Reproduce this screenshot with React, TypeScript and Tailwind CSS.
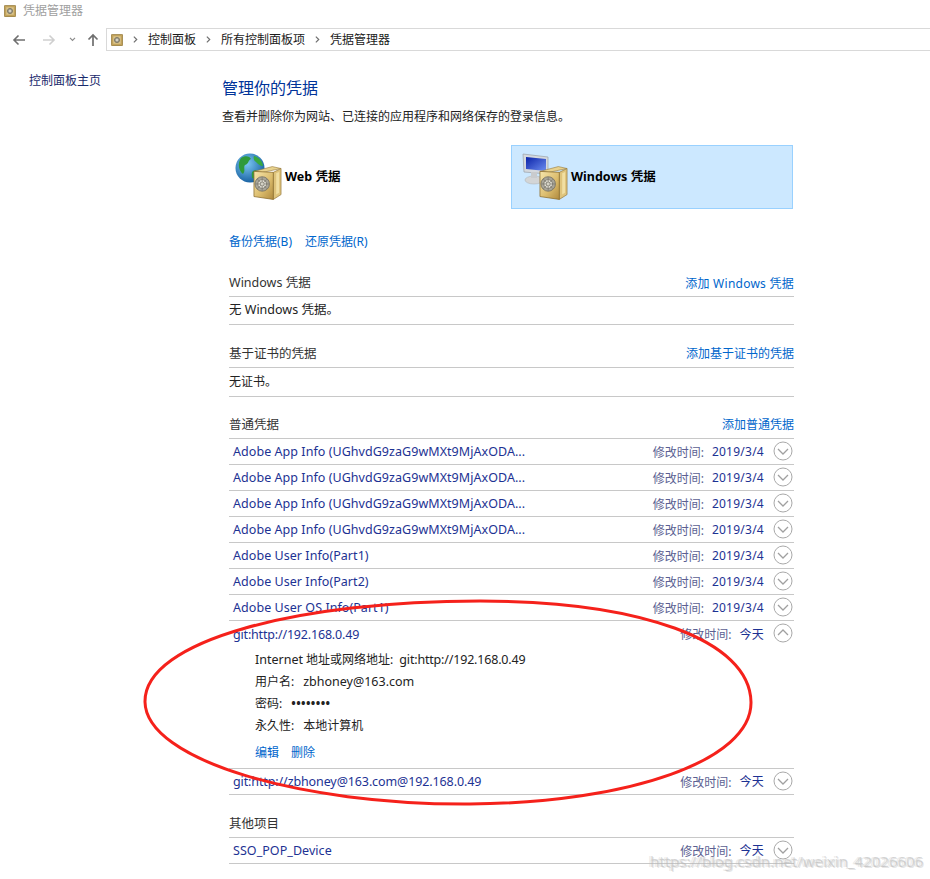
import React from "react";

const font = { fontFamily: '"Noto Sans", "Noto Sans CJK SC", sans-serif' };

function Safe({ id, className }: { id: string; className?: string }) {
  return (
    <svg viewBox="0 0 30 36" className={className}>
      <defs>
        <linearGradient id={id} x1="0" y1="0" x2="1" y2="1">
          <stop offset="0" stopColor="#f6e6ad" />
          <stop offset="0.55" stopColor="#dcbd6e" />
          <stop offset="1" stopColor="#b08a3e" />
        </linearGradient>
      </defs>
      <path d="M1 6 L20 1 L29 3 L10 7 Z" fill="#e8d28e" stroke="#94763a" strokeWidth="0.6" />
      <path d="M21 7 L29 3 L29 30 L21 35 Z" fill="#dfc47c" stroke="#94763a" strokeWidth="0.7" />
      <path d="M24 8 L27 6.5 L27 28 L24 30 Z" fill="#f1dfa2" />
      <path d="M1 6 L21 7 L21 35 L1 32 Z" fill={`url(#${id})`} stroke="#8d6f2f" strokeWidth="0.8" />
      <circle cx="9.5" cy="19" r="7.5" fill="#a8a598" stroke="#6f6b60" strokeWidth="0.8" />
      <circle cx="9.5" cy="19" r="4.5" fill="#e3e1d6" stroke="#77736a" strokeWidth="0.8" />
      <path d="M9.5 12 V26 M2.5 19 H16.5 M4.5 14 L14.5 24 M14.5 14 L4.5 24" stroke="#77736a" strokeWidth="0.7" />
      <circle cx="9.5" cy="19" r="2" fill="#d4d2c6" stroke="#6f6b60" strokeWidth="0.6" />
    </svg>
  );
}

function SmallSafe() {
  return (
    <svg viewBox="0 0 16 16" className="w-3 h-3 shrink-0">
      <rect x="0.5" y="0.5" width="15" height="15" rx="1" fill="#c2a25a" stroke="#8f7434" />
      <rect x="3" y="3" width="10" height="10" fill="#d9c48a" />
      <circle cx="8" cy="8" r="3.4" fill="#a9a594" stroke="#6b6658" />
      <circle cx="8" cy="8" r="1.2" fill="#ece9dd" />
    </svg>
  );
}

function Globe() {
  return (
    <svg viewBox="0 0 30 30" className="w-[30px] h-[30px] absolute left-[13px] top-[8px]">
      <defs>
        <radialGradient id="globe" cx="0.4" cy="0.35" r="0.7">
          <stop offset="0" stopColor="#7cc8f2" />
          <stop offset="1" stopColor="#135c9e" />
        </radialGradient>
      </defs>
      <circle cx="15" cy="15" r="14.5" fill="url(#globe)" />
      <path d="M6 5 C10 2 15 3 16 6 C13 7 14 11 10 12 C8 14 11 18 8 21 C4 18 2 11 6 5 Z" fill="#2f9a3a" />
      <path d="M19 3 C24 4 28 9 28 13 C25 13 23 11 21 9 C19 8 18 5 19 3 Z" fill="#38a83f" />
      <path d="M18 18 C21 16 24 18 24 20 C22 24 19 26 17 25 C17 22 16 20 18 18 Z" fill="#2f9a3a" />
    </svg>
  );
}

function Monitor() {
  return (
    <svg viewBox="0 0 30 34" className="w-[30px] h-[34px] absolute left-[9px] top-[7px]">
      <defs>
        <linearGradient id="screen" x1="0" y1="0" x2="1" y2="1">
          <stop offset="0" stopColor="#0a22a8" />
          <stop offset="1" stopColor="#6d8df0" />
        </linearGradient>
      </defs>
      <path d="M2 1 L27 4 L27 21 L3 19 Z" fill="#d5d9de" stroke="#9aa0a8" strokeWidth="0.7" />
      <path d="M5 4 L25 6 L25 18 L5 16 Z" fill="url(#screen)" />
      <ellipse cx="13" cy="27" rx="9" ry="4" fill="#d3d5d6" stroke="#b3b5b7" strokeWidth="0.6" />
      <rect x="10" y="19" width="6" height="6" fill="#c9cbcd" />
    </svg>
  );
}

function Circle({ up }: { up?: boolean }) {
  return (
    <svg viewBox="0 0 20 20" className="w-5 h-5 shrink-0 ml-[9px] mb-[2px]">
      <circle cx="10" cy="10" r="9" fill="#fff" stroke="#a9a9a9" strokeWidth="1" />
      <path d={up ? "M5 12 L10 7 L15 12" : "M5 8 L10 13 L15 8"} fill="none" stroke="#a0a0a0" strokeWidth="1.3" />
    </svg>
  );
}

function Crumb() {
  return (
    <svg viewBox="0 0 6 8" className="w-[5px] h-[7px] shrink-0">
      <path d="M1 0.5 L4.5 4 L1 7.5" fill="none" stroke="#6e6e6e" strokeWidth="1.4" />
    </svg>
  );
}

function SectionHead({ title, action, actionClass, height }: { title: string; action: string; actionClass?: string; height?: string }) {
  return (
    <div className={(height ?? "h-[27px]") + " flex items-center justify-between border-b border-[#c8c8c8] text-[12px]"}>
      <span className="text-[#333333] text-[12.5px]">{title}</span>
      <span className={"text-[#0066cc] " + (actionClass ?? "")}>{action}</span>
    </div>
  );
}

function Row({ name, time, up, nameClass }: { name: string; time: string; up?: boolean; nameClass?: string }) {
  return (
    <div className="h-[26px] flex items-center border-b border-[#c8c8c8] pl-1 text-[12.5px]">
      <span className={"mt-[2px] text-[#1d3293] whitespace-nowrap " + (nameClass ?? "tracking-[0.05px]")}>{name}</span>
      <span className="mt-[2px] ml-auto text-[#5b5f92] text-[12px]">修改时间:</span>
      <span className="mt-[1px] ml-2 text-[#1d3293] text-[12px] tracking-[0.25px]">{time}</span>
      <Circle up={up} />
      <span className="w-px" />
    </div>
  );
}

const adobe = "Adobe App Info (UGhvdG9zaG9wMXt9MjAxODA...";

export default function App() {
  return (
    <div className="relative w-[930px] h-[879px] bg-white overflow-hidden text-[12px] text-[#222222]" style={font}>
      <div className="h-[22px] flex items-center pl-1 gap-[7px] text-[#a0a0a0]">
        <SmallSafe />
        <span>凭据管理器</span>
      </div>

      <div className="h-[29px] flex items-start pt-[6px]">
        <div className="w-[106px] h-[23px] flex items-center pl-[12px]">
          <svg viewBox="0 0 14 12" className="w-[14px] h-[12px]">
            <path d="M13 6 H2 M6.5 1.5 L2 6 L6.5 10.5" fill="none" stroke="#6f6f6f" strokeWidth="1.6" />
          </svg>
          <svg viewBox="0 0 14 12" className="w-[14px] h-[12px] ml-4">
            <path d="M1 6 H12 M7.5 1.5 L12 6 L7.5 10.5" fill="none" stroke="#cfcfcf" strokeWidth="1.6" />
          </svg>
          <svg viewBox="0 0 8 6" className="w-[7px] h-[5px] ml-[13px]">
            <path d="M1 1 L4 4 L7 1" fill="none" stroke="#8a8a8a" strokeWidth="1.4" />
          </svg>
          <svg viewBox="0 0 12 14" className="w-3 h-[14px] ml-[11px]">
            <path d="M6 13 V2 M1.5 6.5 L6 2 L10.5 6.5" fill="none" stroke="#6f6f6f" strokeWidth="1.7" />
          </svg>
        </div>
        <div className="flex-1 h-[23px] flex items-center border border-r-0 border-[#d9d9d9] pl-[4px] text-[#1a1a1a]">
          <SmallSafe />
          <span className="ml-[10px]"><Crumb /></span>
          <span className="ml-[10px]">控制面板</span>
          <span className="ml-[10px]"><Crumb /></span>
          <span className="ml-[10px]">所有控制面板项</span>
          <span className="ml-[10px]"><Crumb /></span>
          <span className="ml-[10px]">凭据管理器</span>
        </div>
      </div>

      <div className="flex">
        <div className="w-[222px] pl-[29px] pt-[21px] text-[#1a2a6c] leading-[18px]">控制面板主页</div>
        <div className="w-[572px] pt-[26px]">
          <h1 className="text-[16px] leading-[22px] text-[#003399]">管理你的凭据</h1>
          <p className="mt-[9px] leading-[18px]">查看并删除你为网站、已连接的应用程序和网络保存的登录信息。</p>

          <div className="mt-[19px] flex justify-between h-[64px] pr-px">
            <div className="relative w-[283px] flex items-center pl-[63px] font-bold text-black text-[12.5px]">
              <Globe />
              <Safe id="safeA" className="absolute left-[31px] top-[20px] w-[29px] h-[36px]" />
              Web 凭据
            </div>
            <div className="relative w-[282px] flex items-center pl-[59px] font-bold text-black text-[12.5px] bg-[#cce8ff] border border-[#99d1ff]">
              <Monitor />
              <Safe id="safeB" className="absolute left-[27px] top-[19px] w-[29px] h-[36px]" />
              Windows 凭据
            </div>
          </div>

          <div className="pl-[7px] mt-[24px] h-[18px] flex gap-3 items-center text-[#0066cc] leading-[18px]">
            <span>备份凭据(B)</span>
            <span className="ml-px">还原凭据(R)</span>
          </div>

          <div className="pl-[7px]">
            <div className="mt-[20px]">
              <SectionHead title="Windows 凭据" action="添加 Windows 凭据" actionClass="tracking-[0.25px]" height="h-[26px]" />
              <div className="h-[28px] flex items-center border-b border-[#c8c8c8] text-[12.5px] text-[#222222]">无 Windows 凭据。</div>
            </div>

            <div className="mt-[16px]">
              <SectionHead title="基于证书的凭据" action="添加基于证书的凭据" />
              <div className="h-[29px] flex items-center border-b border-[#c8c8c8]">无证书。</div>
            </div>

            <div className="mt-[15px]">
              <SectionHead title="普通凭据" action="添加普通凭据" />
              <Row name={adobe} time="2019/3/4" />
              <Row name={adobe} time="2019/3/4" />
              <Row name={adobe} time="2019/3/4" />
              <Row name={adobe} time="2019/3/4" />
              <Row name="Adobe User Info(Part1)" time="2019/3/4" />
              <Row name="Adobe User Info(Part2)" time="2019/3/4" />
              <Row name="Adobe User OS Info(Part1)" time="2019/3/4" />
              <div className="h-[148px] border-b border-[#c8c8c8]">
                <div className="h-[26px] flex items-center pl-1 text-[12.5px]">
                  <span className="mt-[2px] text-[#1d3293] tracking-[-0.18px]">git:http://192.168.0.49</span>
                  <span className="mt-[2px] ml-auto text-[#5b5f92] text-[12px]">修改时间:</span>
                  <span className="mt-[2px] ml-2 text-[#1d3293] text-[12px] tracking-[0.25px]">今天</span>
                  <Circle up />
                  <span className="w-px" />
                </div>
                <div className="pl-[26px] pt-[2px] text-[12px] leading-[22px] text-[#222222]">
                  <div>
                    <span className="text-[12.5px]">Internet</span> 地址或网络地址:
                    <span className="ml-[6px] text-[12.5px] tracking-[-0.18px]">git:http://192.168.0.49</span>
                  </div>
                  <div>用户名:<span className="ml-[9px] text-[12.5px]">zbhoney@163.com</span></div>
                  <div>密码:<span className="ml-[9px] font-bold tracking-[0.4px]">••••••••</span></div>
                  <div>永久性:<span className="ml-[9px]">本地计算机</span></div>
                  <div className="mt-[5px] flex gap-3 text-[#0066cc]">
                    <span>编辑</span>
                    <span>删除</span>
                  </div>
                </div>
              </div>
              <Row name="git:http://zbhoney@163.com@192.168.0.49" time="今天" nameClass="tracking-[-0.11px]" />
            </div>

            <div className="mt-[16px]">
              <SectionHead title="其他项目" action="" />
              <Row name="SSO_POP_Device" time="今天" />
            </div>
          </div>
        </div>
      </div>

      <svg viewBox="0 0 930 879" className="absolute inset-0 w-[930px] h-[879px] pointer-events-none">
        <path
          d="M480 601 C300 601 144 640 145 702 C146 760 300 805 470 804 C630 803 752 760 751 702 C750 640 640 601 480 601 Z"
          fill="none"
          stroke="#f5211b"
          strokeWidth="3"
        />
      </svg>

      <div className="absolute left-[650px] top-[851px] text-[15px] leading-[20px] text-[#b5b5b5]/50 whitespace-nowrap [text-shadow:1px_1px_0_rgba(190,190,190,0.4),-2px_0_0_rgba(190,190,190,0.3)]">
        https://blog.csdn.net/weixin_42026606
      </div>
    </div>
  );
}
